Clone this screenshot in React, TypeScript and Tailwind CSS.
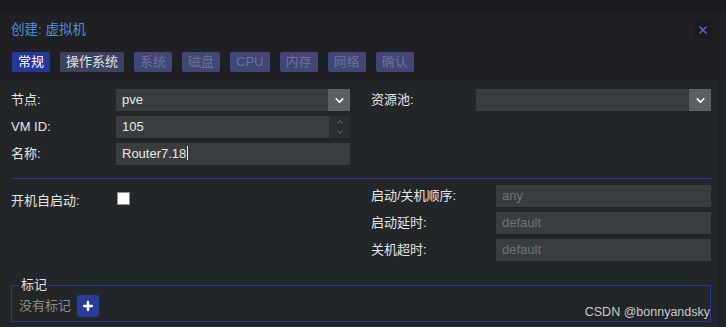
import { ChevronDown, ChevronUp, X, Plus } from 'lucide-react'

const tabs = [
  { label: '常规', state: 'active' },
  { label: '操作系统', state: 'normal' },
  { label: '系统', state: 'disabled' },
  { label: '磁盘', state: 'disabled' },
  { label: 'CPU', state: 'disabled' },
  { label: '内存', state: 'disabled' },
  { label: '网络', state: 'disabled' },
  { label: '确认', state: 'disabled' },
]

function SelectBox({ value, width }: { value?: string; width: string }) {
  return (
    <div className={`flex h-[22px] ${width} bg-[#393d40]`}>
      <div className="flex-1 px-[6px] leading-[22px] text-[#e8e8e8]">{value}</div>
      <div className="flex w-[22px] items-center justify-center bg-[#5b6063]">
        <ChevronDown size={13} strokeWidth={3} className="text-white" />
      </div>
    </div>
  )
}

function TextBox({ value, placeholder, width }: { value?: string; placeholder?: string; width: string }) {
  return (
    <div className={`h-[22px] ${width} bg-[#393d40] px-[6px] leading-[22px]`}>
      {value ? (
        <span className="text-[#e8e8e8]">{value}</span>
      ) : (
        <span className="text-[#6f7275]">{placeholder}</span>
      )}
    </div>
  )
}

export default function App() {
  return (
    <div
      className="relative flex h-[327px] w-[726px] flex-col overflow-hidden bg-[#232628] text-[13px] text-[#e4e4e4]"
      style={{ fontFamily: '"Liberation Sans", "Noto Sans CJK SC", sans-serif' }}
    >
      <div className="h-[12px] bg-[#1b1c1f]" />
      <div className="flex h-[68px] flex-col bg-[#1f2023] pl-[11px] pr-[14px]">
        <div className="flex h-[36px] items-center justify-between">
          <span className="text-[13.5px] text-[#4f8fdc]">创建: 虚拟机</span>
          <div className="flex h-[18px] w-[18px] items-center justify-center bg-[#1a1b1e]">
            <X size={12} strokeWidth={3} className="text-[#5b69c0]" />
          </div>
        </div>
        <div className="mt-[4px] flex gap-[10px] pl-[1px]">
          {tabs.map((t) => (
            <div
              key={t.label}
              className={`h-[20px] rounded-[2px] px-[6px] leading-[20px] ${
                t.state === 'active'
                  ? 'bg-[#25389a] text-white'
                  : t.state === 'normal'
                  ? 'bg-[#3d4262] text-[#e2e2e2]'
                  : 'bg-[#414675] text-[#6d7197]'
              }`}
            >
              {t.label}
            </div>
          ))}
        </div>
      </div>

      <div className="flex flex-1">
        <div className="flex flex-1 flex-col pl-[11px] pr-[7px] pt-[9px]">
          <div className="flex">
            <div className="flex w-[339px] flex-col gap-[5px]">
              <div className="flex items-center">
                <span className="w-[105px]">节点:</span>
                <SelectBox value="pve" width="w-[234px]" />
              </div>
              <div className="flex items-center">
                <span className="w-[105px]">VM ID:</span>
                <div className="flex">
                  <TextBox value="105" width="w-[213px]" />
                  <div className="flex h-[22px] w-[21px] flex-col items-center justify-center bg-[#2a2e30] text-[#5d6264]">
                    <ChevronUp size={10} strokeWidth={2.5} />
                    <ChevronDown size={10} strokeWidth={2.5} />
                  </div>
                </div>
              </div>
              <div className="flex items-center">
                <span className="w-[105px]">名称:</span>
                <div className="h-[22px] w-[234px] bg-[#393d40] px-[6px] leading-[22px] text-[#e8e8e8]">
                  Router7.18<span className="ml-[1px] inline-block h-[14px] w-px translate-y-[2px] bg-[#e8e8e8]" />
                </div>
              </div>
            </div>
            <div className="ml-[21px] flex h-[22px] items-center">
              <span className="w-[105px]">资源池:</span>
              <SelectBox width="w-[235px]" />
            </div>
          </div>

          <div className="mt-[13px] h-px bg-[#2b3a8f]" />

          <div className="mt-[6px] flex">
            <div className="flex w-[360px] items-start pt-[6px]">
              <span className="w-[106px]">开机自启动:</span>
              <div className="mt-[1px] h-[13px] w-[13px] border border-[#8f8f8f] bg-white" />
            </div>
            <div className="flex flex-col gap-[5px]">
              {[
                ['启动/关机顺序:', 'any'],
                ['启动延时:', 'default'],
                ['关机超时:', 'default'],
              ].map(([l, p]) => (
                <div key={l} className="flex items-center">
                  <span className="w-[125px]">{l}</span>
                  <TextBox placeholder={p} width="w-[215px]" />
                </div>
              ))}
            </div>
          </div>

          <fieldset className="mt-[16px] h-[45px] border border-[#28378f] px-[7px] pb-[4px]">
            <legend className="px-[2px] leading-[16px] text-[#e4e4e4]">标记</legend>
            <div className="flex items-center gap-[6px] pt-[2px]">
              <span className="text-[#8b8b8b]">没有标记</span>
              <div className="flex h-[22px] w-[22px] items-center justify-center rounded-[3px] bg-[#283d98]">
                <Plus size={14} strokeWidth={4} className="text-white" />
              </div>
            </div>
          </fieldset>
        </div>
        <div className="w-[8px] bg-[#1f2224]" />
      </div>

      <span className="absolute bottom-[5px] right-[16px] text-[12.5px] text-[#c9c9c9]">CSDN @bonnyandsky</span>
    </div>
  )
}
